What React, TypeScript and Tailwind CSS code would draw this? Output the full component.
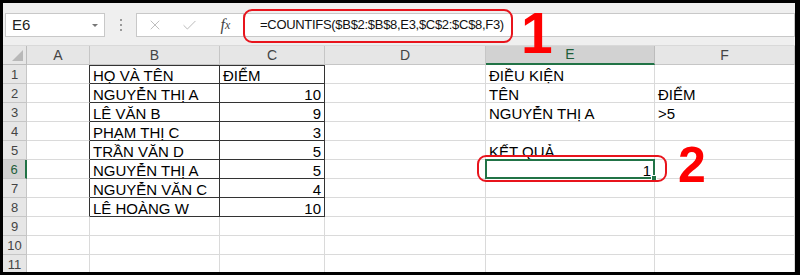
import React from 'react';
import { X, Check } from 'lucide-react';

interface Row {
  b?: string;
  c?: string;
  cRight?: boolean;
  e?: string;
  f?: string;
}

const rows: Row[] = [
  { b: 'HỌ VÀ TÊN', c: 'ĐIỂM', e: 'ĐIỀU KIỆN' },
  { b: 'NGUYỄN THỊ A', c: '10', cRight: true, e: 'TÊN', f: 'ĐIỂM' },
  { b: 'LÊ VĂN B', c: '9', cRight: true, e: 'NGUYỄN THỊ A', f: '>5' },
  { b: 'PHẠM THỊ C', c: '3', cRight: true },
  { b: 'TRẦN VĂN D', c: '5', cRight: true, e: 'KẾT QUẢ' },
  { b: 'NGUYỄN THỊ A', c: '5', cRight: true, e: '1' },
  { b: 'NGUYỄN VĂN C', c: '4', cRight: true },
  { b: 'LÊ HOÀNG W', c: '10', cRight: true },
  {},
  {},
  {},
];

const letters = ['A', 'B', 'C', 'D', 'E', 'F'];

const cellBase = 'h-[19px] pt-[2px] leading-[17px] px-[3px] whitespace-nowrap text-[15px] text-black border-r border-b';

const App = () => {
  return (
    <div className="w-[800px] h-[275px] bg-black pt-[3px] pl-[3px] pr-[5px] pb-[3px] font-['Liberation_Sans',Arial,sans-serif]">
      <div className="relative w-full h-full bg-white flex flex-col">
        {/* Formula bar */}
        <div className="h-[43px] shrink-0 bg-[#efefef] border-b border-[#d9d9d9] flex items-start pt-[10px] pl-[2px]">
          <div className="w-[100px] h-[24px] bg-white border border-[#c8c8c8] flex items-center justify-between pl-[6px] pr-[6px]">
            <span className="text-[15px] text-[#222]">E6</span>
            <span className="w-0 h-0 border-l-[3px] border-r-[3px] border-t-[3px] border-l-transparent border-r-transparent border-t-[#777]" />
          </div>
          <div className="w-[31px] h-[24px] flex flex-col items-center justify-center gap-[3px]">
            <span className="w-[2px] h-[2px] bg-[#9a9a9a]" />
            <span className="w-[2px] h-[2px] bg-[#9a9a9a]" />
            <span className="w-[2px] h-[2px] bg-[#9a9a9a]" />
          </div>
          <div className="w-[108px] h-[24px] bg-white border border-[#c8c8c8] flex items-center">
            <div className="w-[36px] flex justify-center">
              <X size={16} strokeWidth={1.3} className="text-[#b4b4b4]" />
            </div>
            <div className="w-[36px] flex justify-center">
              <Check size={17} strokeWidth={1.3} className="text-[#b4b4b4]" />
            </div>
            <div className="w-[36px] flex justify-center font-['Liberation_Serif',serif] italic text-[16px] text-[#444]">
              f<span className="text-[12px] mt-[3px]">x</span>
            </div>
          </div>
          <div className="flex-1 h-[24px] bg-white border border-[#c8c8c8] border-l-0 flex items-center pl-[16px]">
            <span className="text-[13px] tracking-[-0.3px] text-[#111]">=COUNTIFS($B$2:$B$8,E3,$C$2:$C$8,F3)</span>
          </div>
        </div>

        {/* Grid */}
        <div className="flex-1 min-h-0 overflow-hidden">
          <div className="grid grid-cols-[24px_63px_130px_105px_161px_169px_1fr]">
            {/* header row */}
            <div className="relative h-[19px] bg-[#e6e6e6] border-r border-b border-[#bcbcbc]">
              <span className="absolute right-[3px] bottom-[3px] w-0 h-0 border-l-[11px] border-b-[11px] border-l-transparent border-b-[#b8b8b8]" />
            </div>
            {letters.map((l) =>
              l === 'E' ? (
                <div key={l} className="h-[19px] bg-[#d2d2d2] border-r border-[#bcbcbc] border-b-2 border-b-[#217346] flex items-center justify-center text-[14px] text-[#1e5e3a]">
                  {l}
                </div>
              ) : (
                <div key={l} className="h-[19px] bg-[#e6e6e6] border-r border-b border-[#c6c6c6] flex items-center justify-center text-[14px] text-[#444]">
                  {l}
                </div>
              )
            )}

            {rows.map((r, i) => {
              const n = i + 1;
              const inTable = n <= 8;
              return (
                <React.Fragment key={n}>
                  {n === 6 ? (
                    <div className="h-[19px] pt-[1px] bg-[#d2d2d2] border-r-2 border-r-[#217346] border-b border-b-[#c6c6c6] text-center text-[13px] leading-[18px] text-[#1e5e3a]">
                      {n}
                    </div>
                  ) : (
                    <div className="h-[19px] pt-[1px] bg-[#e6e6e6] border-r border-b border-[#c6c6c6] text-center text-[13px] leading-[18px] text-[#444]">
                      {n}
                    </div>
                  )}
                  {/* A */}
                  <div className={inTable ? `${cellBase} border-r-[#333] border-b-[#dadada]` : `${cellBase} border-[#dadada]`} />
                  {/* B */}
                  <div
                    className={
                      n === 1
                        ? `${cellBase} border-[#333] shadow-[inset_0_1px_0_#333]`
                        : inTable
                        ? `${cellBase} border-[#333]`
                        : `${cellBase} border-[#dadada]`
                    }
                  >
                    {r.b}
                  </div>
                  {/* C */}
                  <div
                    className={
                      n === 1
                        ? `${cellBase} border-[#333] shadow-[inset_0_1px_0_#333]`
                        : inTable
                        ? `${cellBase} border-[#333] ${r.cRight ? 'text-right' : ''}`
                        : `${cellBase} border-[#dadada]`
                    }
                  >
                    {r.c}
                  </div>
                  {/* D */}
                  <div className={`${cellBase} border-[#dadada]`} />
                  {/* E */}
                  {n === 6 ? (
                    <div className="relative h-[19px] border-r border-b border-[#dadada]">
                      <div className="absolute -left-[1px] -top-[1px] right-[-1px] bottom-[-1px] border-2 border-[#217346] text-right text-[15px] leading-[17px] pr-[2px] pt-[1px]">
                        {r.e}
                      </div>
                      <span className="absolute right-[-3px] bottom-[-3px] w-[6px] h-[6px] bg-[#217346] border border-white" />
                    </div>
                  ) : (
                    <div className={`${cellBase} border-[#dadada]`}>{r.e}</div>
                  )}
                  {/* F */}
                  <div className={`${cellBase} border-[#dadada]`}>{r.f}</div>
                </React.Fragment>
              );
            })}
          </div>
        </div>

        {/* Annotations */}
        <div className="absolute left-[240px] top-[6px] w-[270px] h-[34px] border-2 border-[#e8141c] rounded-[9px]" />
        <div className="absolute left-[518px] top-[-2px] text-[57px] leading-[64px] font-bold text-[#f00]">1</div>
        <div className="absolute left-[474px] top-[152px] w-[190px] h-[27px] border-2 border-[#e8141c] rounded-[9px]" />
        <div className="absolute left-[675px] top-[137px] text-[50px] leading-none font-bold text-[#f00]">2</div>
      </div>
    </div>
  );
};

export default App;
